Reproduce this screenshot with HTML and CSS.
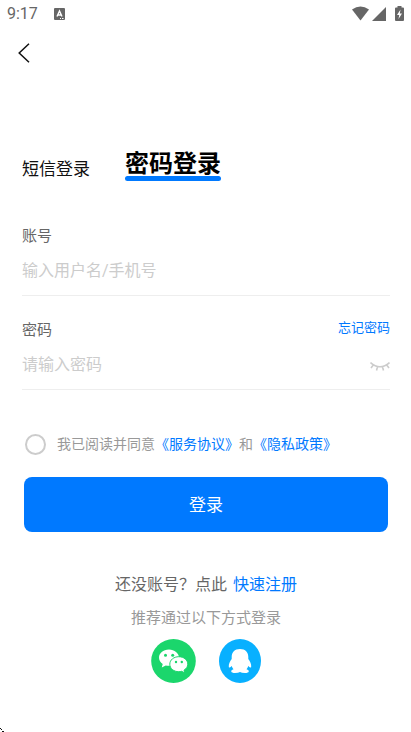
FILE: index.html
```html
<!DOCTYPE html>
<html lang="zh-CN">
<head>
<meta charset="utf-8">
<meta name="viewport" content="width=device-width, initial-scale=1">
<title>密码登录</title>
<link rel="stylesheet" href="styles.css">
</head>
<body>
<div class="status">
  <span class="clock">9:17</span>
  <svg class="app-badge" width="11" height="12" viewBox="0 0 11 12" aria-hidden="true">
    <rect width="11" height="12" rx="1" fill="#666"/>
    <path d="M3 8.500L5.500 3L8 8.500M4 7H7" fill="none" stroke="#fff" stroke-width="1.400"/>
    <path d="M6 10.500H7M8 10.500H9.500" stroke="#fff"/>
  </svg>
  <svg class="signals" width="53" height="16" viewBox="0 0 53 16" aria-hidden="true">
    <path d="M0 3.500Q8.500 -2.500 17 3.500L8.500 14.500Z" fill="#666"/>
    <path d="M34 1V15H20Z" fill="#666"/>
    <path d="M45.500 0H49.500V1.500H51Q52 1.500 52 2.500V14Q52 15 51 15H44Q43 15 43 14V2.500Q43 1.500 44 1.500H45.500Z" fill="#666"/>
    <path d="M48.500 3.500L45 9H47.200L46.500 13L50 7.500H47.800Z" fill="#fff"/>
  </svg>
</div>
<header class="nav">
  <button class="back" type="button" aria-label="返回">
    <svg width="12" height="20" viewBox="0 0 12 20"><path d="M11 0.800L1.200 10L11 19.200" fill="none" stroke="#111" stroke-width="1.500"/></svg>
  </button>
</header>
<main class="page">
  <nav class="tabs">
    <a class="tab" href="#sms">短信登录</a>
    <a class="tab active" href="#password" aria-current="page">密码登录</a>
  </nav>
  <form class="form">
    <div class="field">
      <div class="field-head"><label for="account">账号</label></div>
      <div class="field-row"><input class="text" id="account" type="text" placeholder="输入用户名/手机号"></div>
    </div>
    <div class="field">
      <div class="field-head"><label for="password">密码</label><a class="forgot" href="#forgot">忘记密码</a></div>
      <div class="field-row">
        <input class="text" id="password" type="password" placeholder="请输入密码">
        <button class="eye" type="button" aria-label="显示密码">
          <svg width="20" height="12" viewBox="0 0 20 12" fill="none" stroke="#ccc" stroke-width="1.600"><path d="M0.500 1.500Q10 10 19.500 1.500M3.500 3.800L1 7M7.500 5.700L6.500 9.500M12.500 5.700L13.500 9.500M16.500 3.800L19 7"/></svg>
        </button>
      </div>
    </div>
    <div class="agree">
      <input class="radio" id="agree" type="checkbox">
      <p class="terms"><label for="agree">我已阅读并同意</label><a href="#service">《服务协议》</a>和<a href="#privacy">《隐私政策》</a></p>
    </div>
    <button class="submit" type="submit">登录</button>
  </form>
  <footer class="more">
    <p class="register"><span>还没账号？点此</span><a href="#register">快速注册</a></p>
    <p class="hint">推荐通过以下方式登录</p>
    <div class="social">
      <button type="button" aria-label="微信登录">
        <svg width="45" height="44" viewBox="0 0 45 44">
          <ellipse cx="22.500" cy="22" rx="22.300" ry="22" fill="#1bd66c"/>
          <path d="M18 10.500C12 10.500 8 14.200 8 18.700C8 21.300 9.500 23.500 11.700 25L10.800 28.500L14.700 26.400Q16.500 26.900 18.500 26.800C24 26.700 28 23.300 28 18.700C28 14.200 23.500 10.500 18 10.500Z" fill="#fff"/>
          <path d="M27.800 17.700C22.800 17.700 18.800 20.900 18.800 25.200C18.800 29.500 22.800 32.700 27.800 32.700Q29.200 32.700 30.700 32.300L33.700 34L33 31.200C35.200 29.800 36.800 27.700 36.800 25.200C36.800 20.900 32.800 17.700 27.800 17.700Z" fill="#fff" stroke="#1bd66c"/>
          <g fill="#1bd66c"><circle cx="14.500" cy="16.200" r="1.500"/><circle cx="21.700" cy="16.200" r="1.500"/><circle cx="25" cy="23" r="1.200"/><circle cx="30.800" cy="23" r="1.200"/></g>
        </svg>
      </button>
      <button type="button" aria-label="QQ登录">
        <svg width="42" height="44" viewBox="0 0 42 44">
          <ellipse cx="21" cy="22" rx="21" ry="22" fill="#08b0ff"/>
          <path d="M21 10C15.500 10 12.700 13.500 12.700 18V20C11 22 9.500 25 9.800 28Q10.300 29.500 12.700 27Q13.300 29 14.500 30.200C11 31.300 11.500 34 16 34Q19.500 34 21 33Q22.500 34 26 34C30.500 34 31 31.300 27.500 30.200Q28.700 29 29.300 27Q31.700 29.500 32.200 28C32.500 25 31 22 29.300 20V18C29.300 13.500 26.500 10 21 10Z" fill="#fff"/>
        </svg>
      </button>
    </div>
  </footer>
</main>
<svg class="corner" width="4" height="4" viewBox="0 0 4 4" aria-hidden="true"><path d="M0 0H1V1H2V2H1V1H0ZM2 3H4V4H2Z" fill="#111"/></svg>
</body>
</html>
```
FILE: styles.css
```css
* {
  box-sizing: border-box;
}

body {
  margin: 0;
  min-height: 100vh;
  background: #fff;
  color: #666;
  font-family: Roboto, "Noto Sans CJK SC", sans-serif;
  font-size: 16px;
}

a {
  color: #0079ff;
  text-decoration: none;
}

p {
  margin: 0;
}

button {
  padding: 0;
  border: 0;
  background: none;
  font: inherit;
}

svg {
  display: block;
}

.status {
  display: flex;
  align-items: center;
  height: 28px;
  padding: 0 6px 0 7px;
}

.clock {
  font-size: 16px;
  line-height: 28px;
}

.app-badge {
  margin-left: 16px;
}

.signals {
  margin-left: auto;
}

.nav {
  display: flex;
  align-items: center;
  height: 50px;
  padding: 0 18px;
}

.page {
  padding: 68px 21px 0 22px;
}

.tabs {
  display: flex;
  align-items: flex-end;
  gap: 35px;
  height: 35px;
}

.tab {
  color: #111;
  font-size: 17px;
  line-height: 24px;
}

.tab.active {
  color: #000;
  font-size: 24px;
  font-weight: 700;
}

.tab.active::after {
  content: "";
  display: block;
  height: 5px;
  border-radius: 3px;
  background: #0079ff;
}

.form {
  padding-top: 45px;
}

.field {
  margin-bottom: 24px;
  padding-bottom: 10px;
  border-bottom: 1px solid #eee;
}

.field-head {
  display: flex;
  justify-content: space-between;
  margin-bottom: 9px;
  font-size: 15px;
  line-height: 20px;
}

.forgot {
  font-size: 13px;
  line-height: 16px;
}

.field-row {
  display: flex;
  align-items: center;
  height: 30px;
}

.text {
  flex: 1;
  min-width: 0;
  height: 30px;
  padding: 0;
  border: 0;
  outline: 0;
  background: none;
  color: #333;
  font: inherit;
}

.text::placeholder {
  color: #ccc;
  opacity: 1;
}

.eye {
  padding-top: 6px;
}

.agree {
  display: flex;
  align-items: center;
  gap: 11px;
  margin: 44px 3px 22px;
}

.radio {
  appearance: none;
  flex: none;
  width: 21px;
  height: 21px;
  margin: 0;
  border: 2px solid #ccc;
  border-radius: 50%;
}

.terms {
  padding-bottom: 1px;
  color: #999;
  font-size: 14px;
  line-height: 20px;
}

.submit {
  display: block;
  width: calc(100% - 4px);
  height: 55px;
  margin: 0 2px;
  padding-bottom: 2px;
  border-radius: 8px;
  background: #0079ff;
  color: #fff;
  font-size: 17px;
}

.more {
  padding-top: 41px;
  text-align: center;
}

.register {
  display: flex;
  justify-content: center;
  gap: 6px;
  font-size: 16px;
  line-height: 24px;
}

.hint {
  margin-top: 10px;
  color: #999;
  font-size: 15px;
  line-height: 22px;
}

.social {
  display: flex;
  justify-content: center;
  gap: 23px;
  margin-top: 10px;
}

.corner {
  position: absolute;
  bottom: 0;
  left: 0;
}
```
